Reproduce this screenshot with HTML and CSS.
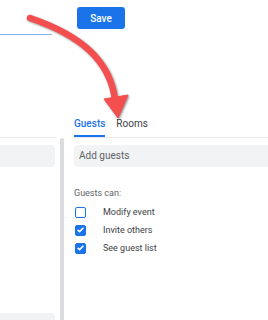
FILE: index.html
```html
<!DOCTYPE html>
<html lang="en">
<head>
  <meta charset="UTF-8" />
  <title>Event details</title>
  <link rel="stylesheet" href="styles.css">
</head>
<body>
  <!-- title + save -->
  <div class="header">
    <div class="title-field"></div>
    <button class="save" type="button">Save</button>
  </div>

  <div class="content">
    <!-- left details column (cut off) -->
    <div class="left">
      <div class="left-rule"></div>
      <div class="left-field"></div>
      <div class="left-field bottom"></div>
    </div>

    <div class="scrollbar"></div>

    <!-- guests panel -->
    <div class="right">
      <div class="tabs">
        <div class="tab active">Guests</div>
        <div class="tab">Rooms</div>
      </div>

      <div class="add-guests">Add guests</div>

      <div class="perm-label">Guests can:</div>

      <div class="perm">
        <span class="check"></span>
        <span>Modify event</span>
      </div>
      <div class="perm">
        <span class="check on">
          <svg viewBox="0 0 11 11" width="11" height="11"><polyline points="2.6,5.8 4.6,7.6 8.4,3.8" /></svg>
        </span>
        <span>Invite others</span>
      </div>
      <div class="perm">
        <span class="check on">
          <svg viewBox="0 0 11 11" width="11" height="11"><polyline points="2.6,5.8 4.6,7.6 8.4,3.8" /></svg>
        </span>
        <span>See guest list</span>
      </div>
    </div>
  </div>

  <!-- red annotation arrow -->
  <svg class="arrow" viewBox="0 0 268 320" width="268" height="320">
    <path d="M30 18 C80 35 110 60 115 100" />
    <polygon points="104,99 128,95 118,118" />
  </svg>
</body>
</html>
```

FILE: styles.css
```css
body {
  margin: 0;
  width: 268px;
  height: 320px;
  overflow: hidden;
  position: relative;
  background: #fff;
  font-family: Roboto, "Liberation Sans", sans-serif;
  color: #3c4043;
}

.header {
  display: flex;
  align-items: flex-start;
}

.title-field {
  width: 52px;
  height: 34px;
  border-bottom: 1px solid #8ab0f2;
}

.save {
  margin: 7px 0 0 25px;
  width: 48px;
  height: 22px;
  padding: 0;
  background: #1a73e8;
  color: #fff;
  border: none;
  border-radius: 3px;
  font-family: Roboto, "Liberation Sans", sans-serif;
  font-size: 10px;
  font-weight: 500;
}

.content {
  display: flex;
  margin-top: 82px;
}

.left {
  width: 55px;
  padding-top: 20px;
  flex-shrink: 0;
}

.left-rule {
  border-top: 1px solid #e8eaed;
}

.left-field {
  margin-top: 7px;
  height: 22px;
  background: #f1f3f4;
  border-radius: 0 4px 4px 0;
}

.left-field.bottom {
  margin-top: 146px;
  height: 7px;
  border-radius: 0 4px 0 0;
}

.scrollbar {
  width: 4px;
  height: 182px;
  margin: 21px 0 0 5px;
  background: #dadce0;
  border-radius: 2px 2px 0 0;
  flex-shrink: 0;
}

.right {
  flex: 1;
  margin-left: 10px;
}

.tabs {
  display: flex;
  gap: 11px;
  border-bottom: 1px solid #e8eaed;
}

.tab {
  font-size: 10px;
  line-height: 14px;
  padding-bottom: 6px;
  color: #3c4043;
}

.tab.active {
  color: #1a73e8;
  font-weight: 500;
  padding-bottom: 4px;
  border-bottom: 2px solid #1a73e8;
}

.add-guests {
  margin-top: 7px;
  height: 22px;
  line-height: 22px;
  padding-left: 5px;
  background: #f1f3f4;
  border-radius: 4px 0 0 4px;
  font-size: 10px;
  color: #5f6368;
}

.perm-label {
  margin-top: 20px;
  margin-bottom: 4px;
  font-size: 9px;
  line-height: 12px;
  color: #5f6368;
}

.perm {
  display: flex;
  align-items: center;
  height: 18px;
  font-size: 9px;
  color: #3c4043;
}

.check {
  box-sizing: border-box;
  width: 11px;
  height: 11px;
  margin: 0 17px 0 1px;
  border: 1.5px solid #1a73e8;
  border-radius: 2px;
  display: flex;
}

.check.on {
  background: #1a73e8;
}

.check svg {
  margin: -1.5px;
  fill: none;
  stroke: #fff;
  stroke-width: 1.6;
}

.arrow {
  position: absolute;
  top: 0;
  left: 0;
  pointer-events: none;
  filter: drop-shadow(1px 1px 1px rgba(0, 0, 0, 0.45));
}

.arrow path {
  fill: none;
  stroke: #f44e4e;
  stroke-width: 6.5;
  stroke-linecap: round;
}

.arrow polygon {
  fill: #f44e4e;
  stroke: #f44e4e;
  stroke-width: 1;
  stroke-linejoin: round;
}
```
